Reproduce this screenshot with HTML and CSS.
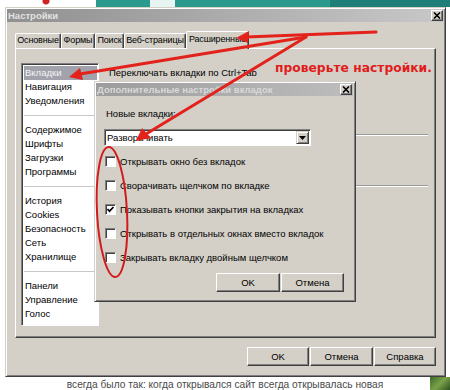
FILE: index.html
```html
<!DOCTYPE html>
<html lang="ru">
<head>
<meta charset="utf-8">
<title>Настройки</title>
<link rel="stylesheet" href="styles.css">
</head>
<body>
<div class="page">
  <div class="banner"></div>
  <div class="window">
    <div class="titlebar">
      <span class="title">Настройки</span>
      <span class="xbtn"><svg width="8" height="7" viewBox="0 0 8 7"><path d="M1 0.5 L7 6.5 M7 0.5 L1 6.5" stroke="#000" stroke-width="1.6"/></svg></span>
    </div>
    <div class="tabs">
      <div class="tab w1">Основные</div>
      <div class="tab w2">Формы</div>
      <div class="tab w3">Поиск</div>
      <div class="tab w4">Веб-страницы</div>
      <div class="tab w5 active">Расширенные</div>
    </div>
    <div class="panel">
      <div class="list">
        <div class="item selected">Вкладки</div>
        <div class="item">Навигация</div>
        <div class="item">Уведомления</div>
        <div class="lsep"></div>
        <div class="item">Содержимое</div>
        <div class="item">Шрифты</div>
        <div class="item">Загрузки</div>
        <div class="item">Программы</div>
        <div class="lsep"></div>
        <div class="item">История</div>
        <div class="item">Cookies</div>
        <div class="item">Безопасность</div>
        <div class="item">Сеть</div>
        <div class="item">Хранилище</div>
        <div class="lsep"></div>
        <div class="item">Панели</div>
        <div class="item">Управление</div>
        <div class="item">Голос</div>
      </div>
      <div class="content">
        <div class="row">Переключать вкладки по Ctrl+Tab</div>
        <div class="hr hr1"></div>
        <div class="hr hr2"></div>
      </div>

      <div class="dialog">
        <div class="titlebar dtitle">
          <span class="title">Дополнительные настройки вкладок</span>
          <span class="xbtn"><svg width="8" height="7" viewBox="0 0 8 7"><path d="M1 0.5 L7 6.5 M7 0.5 L1 6.5" stroke="#000" stroke-width="1.6"/></svg></span>
        </div>
        <div class="dbody">
          <div class="label">Новые вкладки:</div>
          <div class="select">
            <span class="sval">Разворачивать</span>
            <span class="sbtn"><svg width="7" height="4" viewBox="0 0 7 4"><path d="M0 0 H7 L3.5 4 Z" fill="#000"/></svg></span>
          </div>
          <div class="check"><span class="box"></span>Открывать окно без вкладок</div>
          <div class="check"><span class="box"></span>Сворачивать щелчком по вкладке</div>
          <div class="check"><span class="box"><svg width="9" height="9" viewBox="0 0 9 9"><path d="M1.5 4 L3.5 6.2 L7.5 2" fill="none" stroke="#000" stroke-width="1.7"/></svg></span>Показывать кнопки закрытия на вкладках</div>
          <div class="check"><span class="box"></span>Открывать в отдельных окнах вместо вкладок</div>
          <div class="check"><span class="box"></span>Закрывать вкладку двойным щелчком</div>
          <div class="btnrow dbtns">
            <div class="btn bw1">OK</div>
            <div class="btn bw2">Отмена</div>
          </div>
        </div>
      </div>
    </div>
    <div class="btnrow mbtns">
      <div class="btn mb1">OK</div>
      <div class="btn mb2">Отмена</div>
      <div class="btn mb3">Справка</div>
    </div>
  </div>
  <div class="caption">всегда было так: когда открывался сайт всегда открывалась новая</div>
  <div class="pic"></div>

  <svg class="marks" width="450" height="390" viewBox="0 0 450 390">
    <g stroke="#e3221c" stroke-width="3" stroke-linecap="round" fill="none">
      <path d="M376 32 L246 37"/>
      <path d="M306 37 L80 74"/>
      <path d="M306 37 L146 134"/>
    </g>
    <g fill="#e3221c">
      <path d="M236 38 L249 31 L248 43 Z"/>
      <path d="M69 77 L80 68 L83 80 Z"/>
      <path d="M136 141 L142 128 L151 138 Z"/>
    </g>
    <text class="note" x="275" y="72">проверьте настройки.</text>
    <ellipse cx="112" cy="212" rx="15" ry="65" transform="rotate(-3 112 212)" fill="none" stroke="#d21c1c" stroke-width="2"/>
  </svg>
</div>
</body>
</html>
```

FILE: styles.css
```css
* { box-sizing: border-box; }
html, body { margin: 0; padding: 0; }
body { background: #fff; }

.page {
  position: relative;
  width: 450px;
  height: 390px;
  overflow: hidden;
  background: #fff;
  font-family: "Liberation Sans", Arial, sans-serif;
  font-size: 9.5px;
  color: #000;
}

.banner {
  height: 7px;
  background:
    radial-gradient(circle at 46px 1px, #c22 0 3px, transparent 4px),
    linear-gradient(to right, #fff 0 96px, #2b9a8d 96px 150px, #e8f4f2 150px 175px, #2b9a8d 175px 330px, #1f7f78 330px);
}

.window {
  margin-left: 5px;
  width: 441px;
  height: 370px;
  background: #d4d0c8;
  border: 1px solid;
  border-color: #d4d0c8 #404040 #404040 #d4d0c8;
  box-shadow: inset 1px 1px #fff, inset -1px -1px #808080;
  padding: 1px 1px 9px;
  display: flex;
  flex-direction: column;
}

.titlebar {
  height: 13px;
  flex: none;
  display: flex;
  align-items: center;
  justify-content: space-between;
  padding: 0 1px 0 1px;
  background: linear-gradient(to right, #909090, #c8c8c8);
}
.title {
  color: #e2e2e2;
  font-weight: bold;
  font-size: 9.5px;
  line-height: 13px;
}
.xbtn {
  width: 12px;
  height: 11px;
  background: #d4d0c8;
  border: 1px solid;
  border-color: #fff #404040 #404040 #fff;
  box-shadow: inset -1px -1px #808080;
  display: flex;
  align-items: center;
  justify-content: center;
}

.tabs {
  margin-top: 9px;
  height: 17px;
  flex: none;
  display: flex;
  align-items: flex-end;
  padding-left: 8px;
}
.tab {
  height: 15px;
  line-height: 13px;
  font-size: 9px;
  letter-spacing: -0.15px;
  text-align: center;
  background: #d4d0c8;
  border: 1px solid;
  border-bottom: none;
  border-color: #fff #404040 #404040 #fff;
  border-radius: 2px 2px 0 0;
  box-shadow: inset -1px 0 #808080;
  white-space: nowrap;
}
.w1 { width: 46px; }
.w2 { width: 34px; }
.w3 { width: 29px; }
.w4 { width: 62px; }
.w5 { width: 63px; }
.tab.active {
  height: 18px;
  margin-bottom: -1px;
  line-height: 15px;
  position: relative;
  z-index: 2;
}

.panel {
  position: relative;
  margin-left: 8px;
  width: 421px;
  height: 290px;
  flex: none;
  border: 1px solid;
  border-color: #fff #404040 #404040 #fff;
  box-shadow: inset -1px -1px #808080;
  padding: 14px 7px 0 5px;
  display: flex;
}

.list {
  width: 78px;
  height: 263px;
  flex: none;
  background: #fff;
  border: 1px solid;
  border-color: #808080 #fff #fff #808080;
  box-shadow: inset 1px 1px #404040;
  padding: 2px 1px 0 2px;
}
.item {
  height: 14px;
  line-height: 14px;
  padding-left: 1px;
  white-space: nowrap;
}
.item.selected {
  background: #a2a2ad;
  color: #f4f4f4;
}
.lsep {
  height: 15px;
  background: linear-gradient(#fff 0 7px, #c8c8c8 7px 8px, #fff 8px);
}

.content {
  flex: 1;
  margin-left: 10px;
  padding-top: 3px;
}
.row { height: 14px; line-height: 14px; }
.hr {
  height: 2px;
  border-top: 1px solid #9a9a9a;
  border-bottom: 1px solid #fff;
}
.hr1 { margin-top: 54px; }
.hr2 { margin-top: 49px; }

.dialog {
  position: absolute;
  left: 78px;
  top: 32px;
  width: 262px;
  height: 221px;
  background: #d4d0c8;
  border: 1px solid;
  border-color: #d4d0c8 #404040 #404040 #d4d0c8;
  box-shadow: inset 1px 1px #fff, inset -1px -1px #808080;
  padding: 1px 2px 1px 1px;
  z-index: 3;
}
.dtitle { background: linear-gradient(to right, #9c9c9c, #bdbdbd); }
.dtitle .title { color: #d9d9d9; }

.dbody { padding: 0 8px 0 8px; }
.label {
  margin-top: 11px;
  height: 14px;
  line-height: 14px;
  padding-left: 2px;
}
.select {
  margin-top: 8px;
  width: 207px;
  height: 17px;
  background: #fff;
  border: 1px solid;
  border-color: #808080 #fff #fff #808080;
  box-shadow: inset 1px 1px #404040;
  display: flex;
  align-items: center;
  justify-content: space-between;
  padding: 0 1px 0 2px;
}
.sval { line-height: 13px; }
.sbtn {
  width: 13px;
  height: 13px;
  background: #d4d0c8;
  border: 1px solid;
  border-color: #d4d0c8 #404040 #404040 #d4d0c8;
  box-shadow: inset 1px 1px #fff, inset -1px -1px #808080;
  display: flex;
  align-items: center;
  justify-content: center;
}

.check {
  height: 24px;
  display: flex;
  align-items: center;
  white-space: nowrap;
}
.select + .check { margin-top: 3px; }
.box {
  width: 11px;
  height: 11px;
  flex: none;
  margin: 0 4px 0 1px;
  background: #fff;
  border: 1px solid;
  border-color: #808080 #fff #fff #808080;
  box-shadow: inset 1px 1px #404040, 1px 1px #d4d0c8;
  display: flex;
  align-items: center;
  justify-content: center;
}

.btnrow {
  display: flex;
  justify-content: flex-end;
  gap: 1px;
}
.btn {
  height: 19px;
  line-height: 17px;
  text-align: center;
  background: #d4d0c8;
  border: 1px solid;
  border-color: #fff #404040 #404040 #fff;
  box-shadow: inset -1px -1px #808080;
}
.dbtns { margin-top: 4px; padding-right: 1px; }
.bw1 { width: 64px; }
.bw2 { width: 63px; }

.mbtns {
  margin-top: 9px;
  padding-right: 8px;
  flex: none;
}
.mb1 { width: 62px; }
.mb2 { width: 63px; }
.mb3 { width: 62px; }

.caption {
  text-align: center;
  font-size: 10.2px;
  line-height: 13px;
  color: #4a4a4a;
  margin-top: 1px;
}

.pic {
  position: absolute;
  right: 0;
  bottom: 0;
  width: 20px;
  height: 13px;
  background: linear-gradient(135deg, #3d6b2a, #7aa24a 50%, #2f5220);
}

.marks {
  position: absolute;
  left: 0;
  top: 0;
  pointer-events: none;
  z-index: 10;
}
.note {
  font-family: "DejaVu Sans", sans-serif;
  font-weight: bold;
  font-size: 12.3px;
  fill: #e01c1c;
}
```
